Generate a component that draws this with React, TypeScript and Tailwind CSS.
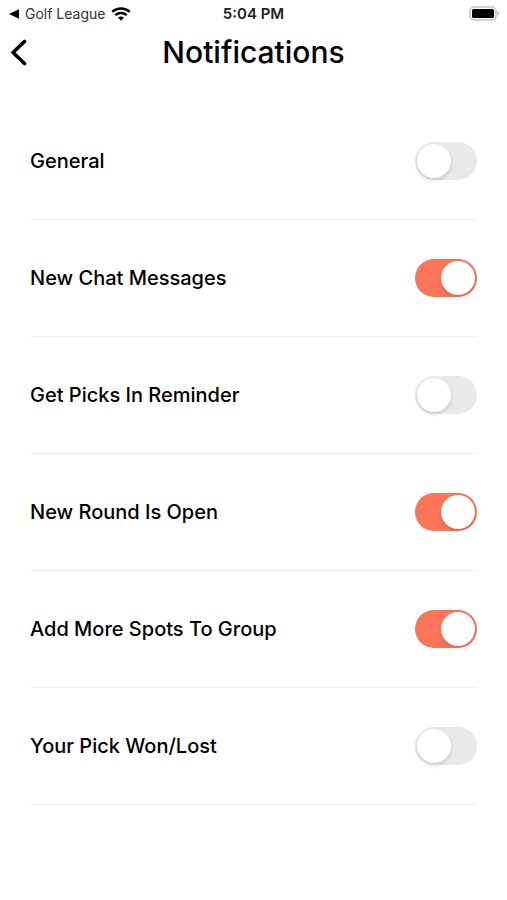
import React, {useState} from 'react';

const settings = [
    { id: "general", label: "General", on: false },
    { id: "chat", label: "New Chat Messages", on: true },
    { id: "picks", label: "Get Picks In Reminder", on: false },
    { id: "round", label: "New Round Is Open", on: true },
    { id: "spots", label: "Add More Spots To Group", on: true },
    { id: "result", label: "Your Pick Won/Lost", on: false },
]

const StatusBar = () => {
    return (
        <div className="grid grid-cols-3 items-center h-7 pl-2 pr-2 text-sm text-[#222]">
            <div className="flex items-center gap-1.5 whitespace-nowrap">
                <svg width="11" height="10" viewBox="0 0 11 10" fill="#000" aria-hidden="true">
                    <path d="M11 0.3v9.400L1 5z" />
                </svg>
                <a href="#" className="text-[#333]">Golf League</a>
                <svg width="20" height="14" viewBox="0 0 20 14" fill="none" stroke="#000" strokeWidth="2.4" aria-hidden="true">
                    <path d="M1.2 4.8c5-4.4 12.600-4.400 17.600 0" />
                    <path d="M4.300 8.200c3.300-2.900 8.100-2.900 11.400 0" />
                    <path d="M10 13.800l-3-3.200c1.700-1.400 4.300-1.400 6 0z" fill="#000" stroke="none" />
                </svg>
            </div>
            <div className="text-center text-[15px] font-semibold">5:04 PM</div>
            <div className="flex justify-end">
                <svg width="30" height="16" viewBox="0 0 30 16" aria-hidden="true">
                    <rect x="1" y="1" width="26" height="13" rx="4" fill="#fff" stroke="#c4c4c4" strokeWidth="1.500" />
                    <rect x="3" y="3" width="22" height="9" rx="1.500" fill="#000" />
                    <path d="M28.500 5.300c1.800 0.600 1.800 3.800 0 4.400z" fill="#aaa" />
                </svg>
            </div>
        </div>
    )
}

export default function App() {

const [items, setItems] = useState(settings);

const toggle = (id: string) => {
    setItems(items.map((item) => item.id === id ? { ...item, on: !item.on } : item));
}

return (
    <main className="min-h-screen bg-white text-black font-[Inter,'Liberation_Sans',sans-serif]">
        <StatusBar />
        <header className="grid grid-cols-[32px_1fr_32px] items-center h-12 px-2">
            <button type="button" aria-label="Back">
                <svg width="20" height="28" viewBox="0 0 20 28" fill="none" stroke="#000" strokeWidth="3.600" strokeLinecap="round" strokeLinejoin="round" aria-hidden="true">
                    <path d="M16.500 3.500L5 14.500l11.500 11" />
                </svg>
            </button>
            <h1 className="text-center text-[30px] font-medium">Notifications</h1>
        </header>
        <ul className="mt-[27px] px-[30px]">
            {items.map((item) => (
                <li key={item.id} className="flex items-center justify-between h-[117px] border-b border-[#f1f1f2]">
                    <label htmlFor={item.id} className="text-[20px] font-medium">{item.label}</label>
                    <input
                        id={item.id}
                        type="checkbox"
                        role="switch"
                        checked={item.on}
                        onChange={() => toggle(item.id)}
                        className="appearance-none flex items-center shrink-0 w-[62px] h-[38px] px-[2px] rounded-full bg-[#e9e9eb] checked:bg-[#fc7559] checked:justify-end before:size-[34px] before:rounded-full before:bg-white before:shadow-[0_2px_4px_rgba(0,0,0,0.15)]"
                    />
                </li>
            ))}
        </ul>
    </main>
  );
}
